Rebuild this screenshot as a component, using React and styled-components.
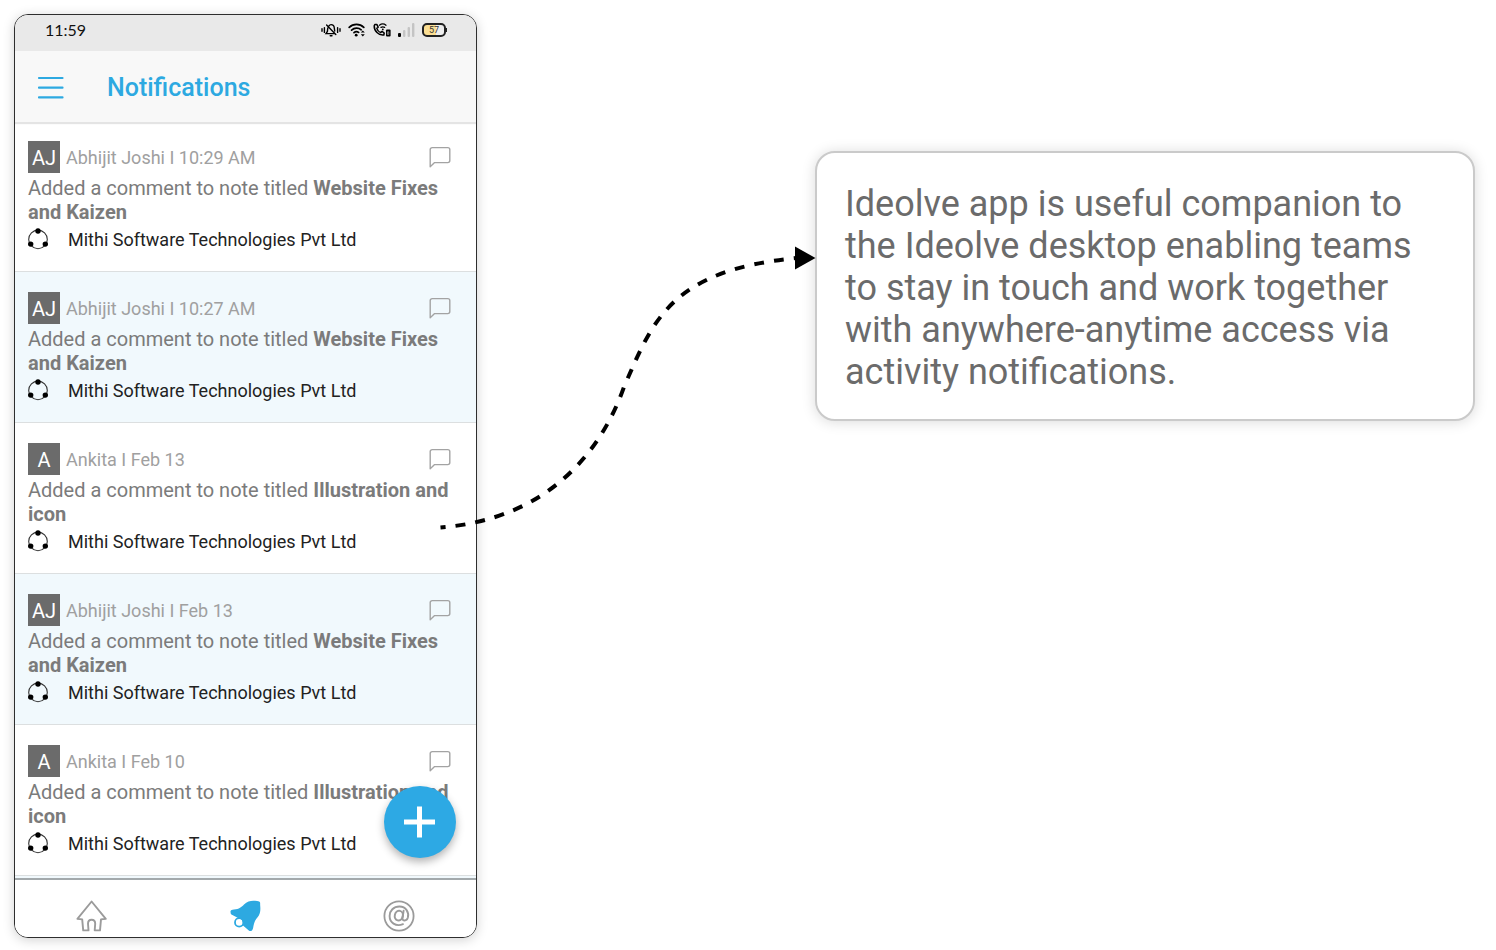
import styled, { createGlobalStyle } from 'styled-components'

const notifications = [
  { initials: 'AJ', name: 'Abhijit Joshi', time: '10:29 AM', note: 'Website Fixes and Kaizen' },
  { initials: 'AJ', name: 'Abhijit Joshi', time: '10:27 AM', note: 'Website Fixes and Kaizen' },
  { initials: 'A', name: 'Ankita', time: 'Feb 13', note: 'Illustration and icon' },
  { initials: 'AJ', name: 'Abhijit Joshi', time: 'Feb 13', note: 'Website Fixes and Kaizen' },
  { initials: 'A', name: 'Ankita', time: 'Feb 10', note: 'Illustration and icon' },
]

const SilentIcon = () => (
  <svg width="20" height="16" viewBox="0 0 20 16" fill="none" stroke="#000" strokeWidth="1.4" strokeLinecap="round">
    <path d="M1 6.8v2.400M3.400 5.600v4.800M16.600 5.600v4.800M19 6.800v2.400" />
    <path d="M8 3.800C8.500 3 9.200 2.600 10 2.600c2 0 3.200 1.600 3.300 3.400l.4 3M6.800 6l-.4 3.400-1.400 2.200h8.800M9.200 13.800h1.800M5.600 3l9.200 9.400" />
  </svg>
)

const WifiIcon = () => (
  <svg width="18" height="14" viewBox="0 0 18 14" fill="none" stroke="#000" strokeWidth="1.700" strokeLinecap="round">
    <path d="M1.200 4.400C5.200.4 11.800.4 15.800 4.400M3.600 7.200c2.800-2.600 7-2.600 9.600-.4M6 9.600c1.400-1.200 3.200-1.200 4.600-.2" />
    <circle cx="8.200" cy="12.200" r="1.400" fill="#000" stroke="none" />
    <path d="M12.800 9.600l2-2.200 2 2.200zM12.800 11.200l2 2.200 2-2.200z" fill="#000" stroke="none" />
  </svg>
)

const CallIcon = () => (
  <svg width="18" height="14" viewBox="0 0 18 14" fill="none" stroke="#000" strokeWidth="1.500" strokeLinecap="round" strokeLinejoin="round">
    <path d="M1.800 1.600l2-.2 1.400 2.800-1.400 1.200c.6 2 1.800 3.400 3.800 4.200l1.400-1.200 2.200 1.600-.4 2C5.600 12.800 1 7.800 1.200 2.800z" />
    <path d="M6.400 2.200c2.200-1.600 4.600-1.600 6.600 0M8 4.400c1.200-.8 2.400-.8 3.600 0" strokeWidth="1.300" />
    <circle cx="9.800" cy="6.400" r=".9" fill="#000" stroke="none" />
    <rect x="13" y="6.600" width="4.600" height="7" rx="1" fill="#000" stroke="none" />
    <path d="M14.800 8.800h1v2.600h-1z" stroke="#ddd" strokeWidth=".6" />
  </svg>
)

const SignalIcon = () => (
  <svg width="17" height="14" viewBox="0 0 17 14">
    <rect x="0" y="10" width="3" height="4" rx="1" fill="#000" />
    <rect x="5" y="7" width="2.400" height="7" rx="1" fill="#c4c4c4" />
    <rect x="9.600" y="4" width="2.400" height="10" rx="1" fill="#c4c4c4" />
    <rect x="14" y="0" width="2.400" height="14" rx="1" fill="#c4c4c4" />
  </svg>
)

const MenuIcon = () => (
  <svg width="27" height="24" viewBox="0 0 27 24" stroke="#2da9e1" strokeWidth="2.200" strokeLinecap="round">
    <path d="M2 2h23.500M2 11.700h23.500M2 21.400h23.500" />
  </svg>
)

const CommentIcon = () => (
  <svg width="22" height="22" viewBox="0 0 22 22" fill="none" stroke="#a3a3a3" strokeWidth="1.400" strokeLinejoin="round">
    <path d="M1.200 20.800V3.600c0-1.200.8-2 2-2h15.600c1.200 0 2 .8 2 2v11c0 1.200-.8 2-2 2H5.600z" />
  </svg>
)

const TeamIcon = () => (
  <svg width="20" height="22" viewBox="0 0 20 22">
    <circle cx="10" cy="11.400" r="9.300" fill="none" stroke="#333" strokeWidth="1.100" />
    <circle cx="10" cy="3" r="2.700" />
    <circle cx="2.700" cy="16.100" r="2.700" />
    <circle cx="17.300" cy="16.100" r="2.700" />
  </svg>
)

const HomeIcon = () => (
  <svg width="32" height="32" viewBox="0 0 32 32" fill="none" stroke="#9b9b9b" strokeWidth="1.900" strokeLinejoin="round">
    <path d="M15.600 1.500L1.400 18.800l4.800.6 1 11h5.300l-.5-6.600c0-5.400 7.200-5.400 7.200 0l-.5 6.600H24l1-11 4.800-.6z" />
  </svg>
)

const BellIcon = () => (
  <svg width="32" height="32" viewBox="0 0 32 32">
    <circle cx="9.200" cy="22.400" r="4.200" fill="none" stroke="#2da9e1" strokeWidth="1.800" />
    <path
      d="M.6 12.400C0 10.400 1.600 9.400 4 9.400c5.200 0 7.600-2.400 10-4.800C17.200 1.400 20.800.6 24.200.8c1.600-.2 3.600.2 5 .8 1.400.8.8 2 1 3.800.4 4.400.4 8.600-2.800 12.200-2.600 2.800-3.400 5.800-4.200 9.800-.4 3-2.400 4.600-4.400 3.200L13 25.400c.2-4-1-6.600-4.400-7.200L1.400 14.600C.8 14 .6 13.200.6 12.400z"
      fill="#2da9e1"
    />
  </svg>
)

const MentionIcon = () => (
  <svg width="32" height="32" viewBox="0 0 32 32" fill="none" stroke="#9b9b9b" strokeLinecap="round">
    <circle cx="16" cy="16" r="14.600" strokeWidth="1.800" />
    <ellipse cx="15.800" cy="15.600" rx="4" ry="4.900" transform="rotate(14 15.800 15.600)" strokeWidth="2" />
    <path d="M20.600 10.800l-1.100 7.600c-.2 3 4.200 2.800 5.300-.6 1.600-5.600-2-11.200-8.200-11.300C10.600 6.400 6.600 10.800 6.600 16c0 6.600 6 11 13.400 8.200" strokeWidth="1.900" />
  </svg>
)

const PlusIcon = () => (
  <svg width="32" height="32" viewBox="0 0 32 32" fill="none" stroke="#fff" strokeWidth="5">
    <path d="M15.500 .5v31M0 16h31" />
  </svg>
)

const NotificationRow = ({ initials, name, time, note }) => {
  return (
    <Row>
      <RowHead>
        <Avatar>{initials}</Avatar>
        <Meta>
          {name} I {time}
        </Meta>
        <CommentIcon />
      </RowHead>
      <Message>
        Added a comment to note titled <strong>{note}</strong>
      </Message>
      <Company>
        <TeamIcon />
        Mithi Software Technologies Pvt Ltd
      </Company>
    </Row>
  )
}

const App = () => {
  return (
    <>
      <GlobalStyle />
      <Page>
        <Phone>
          <StatusBar>
            <Clock>11:59</Clock>
            <StatusIcons>
              <SilentIcon />
              <WifiIcon />
              <CallIcon />
              <SignalIcon />
              <Battery>57</Battery>
            </StatusIcons>
          </StatusBar>
          <Header>
            <MenuButton aria-label="Menu">
              <MenuIcon />
            </MenuButton>
            <Title>Notifications</Title>
          </Header>
          <List>
            {notifications.map((item, index) => (
              <NotificationRow key={index} {...item} />
            ))}
          </List>
          <TabBar>
            <Tab href="#home" aria-label="Home">
              <HomeIcon />
            </Tab>
            <Tab href="#notifications" aria-label="Notifications">
              <BellIcon />
            </Tab>
            <Tab href="#mentions" aria-label="Mentions">
              <MentionIcon />
            </Tab>
          </TabBar>
          <AddButton aria-label="Add">
            <PlusIcon />
          </AddButton>
        </Phone>
        <Connector viewBox="0 0 338 540" aria-hidden="true">
          <path
            d="M-36.500 513.500C71 505 124 438 147 373C176 306 194 256 320 244"
            fill="none"
            stroke="#000"
            strokeWidth="4"
            strokeDasharray="10 10"
            strokeDashoffset="5"
          />
          <path d="M318 232.500L338.500 244L318 255.500z" />
        </Connector>
        <Callout>
          Ideolve app is useful companion to the Ideolve desktop enabling teams to stay in touch and work together with
          anywhere-anytime access via activity notifications.
        </Callout>
      </Page>
    </>
  )
}

export default App

const GlobalStyle = createGlobalStyle`
  * {
    box-sizing: border-box;
  }

  body {
    margin: 0;
    background: #fff;
    font-family: Roboto, 'Liberation Sans', sans-serif;
  }
`

const Page = styled.div`
  display: grid;
  grid-template-columns: 463fr 338fr 660fr;
  align-items: start;
  min-height: 100vh;
  padding: 14px 21px 12px 14px;
`

const Phone = styled.main`
  position: relative;
  display: flex;
  flex-direction: column;
  height: calc(100vh - 26px);
  border: 1px solid #2e2e2e;
  border-radius: 14px;
  background: #fff;
  box-shadow: 0 2px 12px rgba(0, 0, 0, 0.18);
  overflow: hidden;
`

const StatusBar = styled.div`
  display: flex;
  flex-shrink: 0;
  align-items: center;
  justify-content: space-between;
  height: 36px;
  padding: 0 30px 6px;
  background: #e9e9e9;
`

const Clock = styled.span`
  padding-bottom: 2px;
  font-family: Lato, sans-serif;
  font-size: 16px;
  color: #111;
`

const StatusIcons = styled.div`
  display: flex;
  align-items: center;
  gap: 7px;
`

const Battery = styled.span`
  position: relative;
  width: 24px;
  height: 14px;
  border: 2px solid #222;
  border-radius: 5px;
  background: linear-gradient(90deg, #fbdf94 60%, #eee 60%);
  color: #333;
  font-size: 9px;
  line-height: 11px;
  text-align: center;

  &::after {
    content: '';
    position: absolute;
    top: 3px;
    right: -3px;
    width: 2px;
    height: 4px;
    background: #222;
  }
`

const Header = styled.header`
  position: relative;
  z-index: 1;
  display: flex;
  flex-shrink: 0;
  align-items: center;
  gap: 43px;
  height: 70px;
  padding: 3px 22px 0;
  background: #f8f8f8;
  box-shadow: 0 1px 0 #f8f8f8, 0 3px 1px #e4e4e4;
`

const MenuButton = styled.button`
  display: flex;
  padding: 0;
  border: 0;
  background: none;
`

const Title = styled.h1`
  margin: 0;
  font-size: 25px;
  font-weight: 500;
  color: #2da9e1;
`

const List = styled.ul`
  flex: 1;
  min-height: 0;
  margin: 0;
  padding: 0;
  background: #f1f9fd;
  list-style: none;
  overflow: hidden;
`

const Row = styled.li`
  padding: 20px 12px 19px 13px;
  border-bottom: 1px solid #dcdfe0;
  background: #fff;

  &:nth-child(even) {
    background: #f1f9fd;
  }
`

const RowHead = styled.div`
  display: flex;
  align-items: center;
  gap: 6px;
  height: 32px;
  padding-right: 13px;

  > svg {
    margin-left: auto;
  }
`

const Avatar = styled.div`
  width: 32px;
  height: 32px;
  background: #6b6b6b;
  color: #fff;
  font-size: 20px;
  line-height: 34px;
  text-align: center;
`

const Meta = styled.span`
  font-size: 18px;
  color: #a0a0a0;
`

const Message = styled.p`
  margin: 3px 0 4px;
  font-size: 20px;
  line-height: 24px;
  color: #7b7b7b;

  strong {
    font-weight: 700;
  }
`

const Company = styled.div`
  display: flex;
  gap: 20px;
  font-size: 18px;
  line-height: 24px;
  color: #222;
`

const TabBar = styled.nav`
  display: flex;
  flex-shrink: 0;
  height: 59px;
  border-top: 2px solid #a3a9ac;
  background: #fff;
`

const Tab = styled.a`
  display: flex;
  flex: 1;
  justify-content: center;
  padding-top: 20px;
`

const AddButton = styled.button`
  position: absolute;
  right: 20px;
  bottom: 79px;
  z-index: 1;
  display: flex;
  align-items: center;
  justify-content: center;
  width: 72px;
  height: 72px;
  padding: 0;
  border: 0;
  border-radius: 50%;
  background: #2da9e4;
  box-shadow: 0 4px 8px rgba(0, 0, 0, 0.3);
`

const Connector = styled.svg`
  z-index: 1;
  width: 100%;
  overflow: visible;
`

const Callout = styled.aside`
  margin-top: 137px;
  padding: 30px 28px 26px;
  border: 2px solid #cacaca;
  border-radius: 20px;
  background: #fff;
  box-shadow: 0 1px 14px rgba(0, 0, 0, 0.15);
  font-size: 36px;
  line-height: 42px;
  color: #6b6b6b;
`
